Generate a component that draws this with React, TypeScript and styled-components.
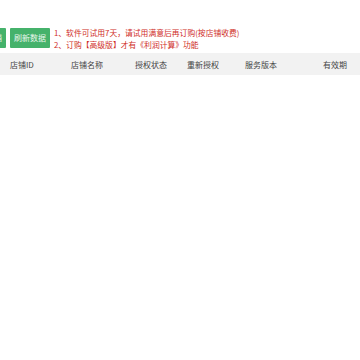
import React from 'react';
import styled, { createGlobalStyle } from 'styled-components';

const GlobalStyle = createGlobalStyle`
  html, body {
    margin: 0;
    padding: 0;
    background: #ffffff;
    font-family: "Noto Sans CJK SC", "Liberation Sans", sans-serif;
  }
`;

const Page = styled.div`
  width: 360px;
  height: 360px;
  overflow: hidden;
  padding-top: 28px;
  box-sizing: border-box;
`;

const Toolbar = styled.div`
  display: flex;
  align-items: center;
  height: 20px;
`;

const Button = styled.div<{ $width: number; $offset?: number }>`
  width: ${(p) => p.$width}px;
  height: 20px;
  margin-left: ${(p) => p.$offset ?? 0}px;
  margin-right: 4px;
  background: #45b26b;
  color: #e8f6ec;
  border-radius: 1px;
  font-size: 8px;
  line-height: 20px;
  text-align: center;
  white-space: nowrap;
  flex-shrink: 0;
`;

const Notes = styled.div`
  display: flex;
  flex-direction: column;
  gap: 1px;
  color: #cf2e28;
  font-size: 7.8px;
  line-height: 11px;
  white-space: nowrap;
`;

const TableHead = styled.div`
  margin-top: 5px;
  height: 22px;
  background: #f2f2f2;
  display: grid;
  grid-template-columns: 61px 64px 52px 58px 78px 1fr;
  align-items: center;
  padding-left: 10px;
  color: #444444;
  font-size: 8px;
`;

const HeadCell = styled.div`
  white-space: nowrap;
`;

const columns = ['店铺ID', '店铺名称', '授权状态', '重新授权', '服务版本', '有效期'];

export default function App() {
  return (
    <>
      <GlobalStyle />
      <Page>
        <Toolbar>
          <Button $width={40} $offset={-34}>添加店铺</Button>
          <Button $width={40}>刷新数据</Button>
          <Notes>
            <span>1、软件可试用7天，请试用满意后再订购(按店铺收费)</span>
            <span>2、订购【高级版】才有《利润计算》功能</span>
          </Notes>
        </Toolbar>
        <TableHead>
          {columns.map((c) => (
            <HeadCell key={c}>{c}</HeadCell>
          ))}
        </TableHead>
      </Page>
    </>
  );
}
